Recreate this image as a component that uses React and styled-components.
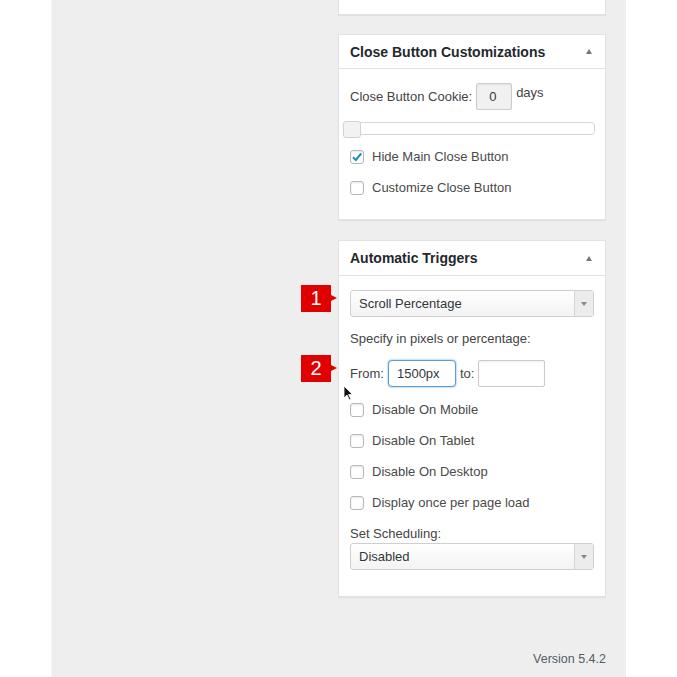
import React from "react";
import styled, { createGlobalStyle } from "styled-components";

const Global = createGlobalStyle`
  body {
    margin: 0;
    background: #ffffff;
    font-family: "Liberation Sans", Arial, sans-serif;
    color: #444;
  }
`;

const Page = styled.div`
  display: flex;
  height: 677px;
  overflow: hidden;
`;

const Column = styled.div`
  margin-left: 51px;
  width: 575px;
  height: 677px;
  background: #eeeeee;
  border-left: 1px solid #f6f6f6;
  box-sizing: border-box;
  display: flex;
  flex-direction: column;
  align-items: flex-end;
  padding-right: 20px;
`;

const Panel = styled.div`
  width: 268px;
  box-sizing: border-box;
  background: #fff;
  border: 1px solid #e2e2e2;
  box-shadow: 0 1px 1px rgba(0, 0, 0, 0.05);
  margin-top: ${(p) => p.$top || 0}px;
  ${(p) => p.$cut && "border-top: none; height: 15px;"}
`;

const Header = styled.div`
  height: ${(p) => p.$h || 33}px;
  display: flex;
  align-items: center;
  justify-content: space-between;
  padding: 0 11px;
  border-bottom: 1px solid #e2e2e2;
  font-size: 14px;
  font-weight: bold;
  color: #23282d;
`;

const Toggle = styled.span`
  width: 0;
  height: 0;
  border-left: 3.5px solid transparent;
  border-right: 3.5px solid transparent;
  border-bottom: 5px solid #72777c;
  margin-right: 2px;
`;

const Body = styled.div`
  padding: ${(p) => p.$pad || "14px 11px 16px"};
  display: flex;
  flex-direction: column;
  font-size: 13px;
`;

const InlineRow = styled.div`
  position: relative;
  display: flex;
  align-items: center;
  gap: 4px;
  height: 27px;
  margin-top: ${(p) => p.$top || 0}px;
`;

const TextBox = styled.div`
  width: ${(p) => p.$w}px;
  height: 27px;
  box-sizing: border-box;
  display: flex;
  align-items: center;
  padding-left: ${(p) => p.$padL || 8}px;
  border: 1px solid ${(p) => (p.$focus ? "#5b9dd9" : "#ccc")};
  border-radius: ${(p) => (p.$focus ? 4 : 2)}px;
  background: ${(p) => p.$bg || "#fff"};
  box-shadow: ${(p) =>
    p.$focus ? "0 0 2px rgba(30,140,190,.8)" : "inset 0 1px 2px rgba(0,0,0,.07)"};
  color: #32373c;
  font-size: 13px;
`;

const Days = styled.span`
  align-self: flex-start;
  margin-top: 2px;
`;

const Slider = styled.div`
  position: relative;
  margin-top: 12px;
  margin-left: -7px;
  width: 250px;
  height: 11px;
  border: 1px solid #d6d6d6;
  border-radius: 4px;
  background: #fff;
`;

const Handle = styled.span`
  position: absolute;
  left: -1px;
  top: -2px;
  width: 16px;
  height: 15px;
  border: 1px solid #d3d3d3;
  border-radius: 3px;
  background: #f2f2f2;
`;

const CheckRow = styled.label`
  display: flex;
  align-items: center;
  gap: 8px;
  height: 31px;
  margin-top: ${(p) => p.$top || 0}px;
  color: #4a4a4a;
`;

const Box = styled.span`
  width: 14px;
  height: 14px;
  box-sizing: border-box;
  border: 1px solid #b4b9be;
  border-radius: 3px;
  background: #fff;
  box-shadow: inset 0 1px 2px rgba(0, 0, 0, 0.1);
  display: flex;
  align-items: center;
  justify-content: center;
`;

const SelectWrap = styled.div`
  position: relative;
`;

const Select = styled.div`
  position: relative;
  height: 27px;
  width: 244px;
  box-sizing: border-box;
  display: flex;
  align-items: center;
  padding-left: 8px;
  border: 1px solid #cfcfcf;
  border-radius: 3px;
  background: linear-gradient(#ffffff, #f3f3f3);
  color: #32373c;
  font-size: 13px;
  margin-top: ${(p) => p.$top || 0}px;
`;

const SelectArrow = styled.span`
  position: absolute;
  right: 0;
  top: 0;
  bottom: 0;
  width: 18px;
  border-left: 1px solid #d6d6d6;
  background: #ececec;
  display: flex;
  align-items: center;
  justify-content: center;
  &::after {
    content: "";
    border-left: 3px solid transparent;
    border-right: 3px solid transparent;
    border-top: 4px solid #888;
  }
`;

const Label = styled.div`
  height: 17px;
  display: flex;
  align-items: center;
  margin-top: ${(p) => p.$top || 0}px;
`;

const Badge = styled.div`
  position: absolute;
  left: -49px;
  top: ${(p) => p.$y || 0}px;
  width: 30px;
  height: 27px;
  background: #e00000;
  color: #fff;
  font-size: 20px;
  display: flex;
  align-items: center;
  justify-content: center;
  &::after {
    content: "";
    position: absolute;
    right: -6px;
    top: 10px;
    border-top: 3.5px solid transparent;
    border-bottom: 3.5px solid transparent;
    border-left: 6px solid #e00000;
  }
`;

const Cursor = styled.svg`
  position: absolute;
  left: -7px;
  top: 25px;
`;

const Version = styled.div`
  margin-top: auto;
  padding-bottom: 11px;
  font-size: 12.5px;
  color: #555d66;
`;

function Check({ checked }) {
  return (
    <Box>
      {checked && (
        <svg width="12" height="12" viewBox="0 0 12 12">
          <path d="M2 6.2 L4.8 9 L10.2 2.5" fill="none" stroke="#1e8cbe" strokeWidth="2" />
        </svg>
      )}
    </Box>
  );
}

export default function App() {
  return (
    <Page>
      <Global />
      <Column>
        <Panel $cut />
        <Panel $top={19}>
          <Header>
            Close Button Customizations
            <Toggle />
          </Header>
          <Body>
            <InlineRow>
              Close Button Cookie:
              <TextBox $w={36} $padL={12} $bg="#f1f1f1">0</TextBox>
              <Days>days</Days>
            </InlineRow>
            <Slider>
              <Handle />
            </Slider>
            <CheckRow $top={6}>
              <Check checked />
              Hide Main Close Button
            </CheckRow>
            <CheckRow>
              <Check />
              Customize Close Button
            </CheckRow>
          </Body>
        </Panel>
        <Panel $top={20}>
          <Header $h={34}>
            Automatic Triggers
            <Toggle />
          </Header>
          <Body $pad="14px 11px 26px">
            <SelectWrap>
              <Badge $y={-5}>1</Badge>
              <Select>
                Scroll Percentage
                <SelectArrow />
              </Select>
            </SelectWrap>
            <Label $top={13}>Specify in pixels or percentage:</Label>
            <InlineRow $top={13}>
              <Badge $y={-5}>2</Badge>
              From:
              <TextBox $w={68} $focus>1500px</TextBox>
              to:
              <TextBox $w={67} />
              <Cursor width="11" height="16" viewBox="0 0 11 16">
                <path d="M1 1 L1 13 L4 10 L6.5 15 L8 14.3 L5.6 9.5 L9.5 9.5 Z" fill="#111" stroke="#fff" strokeWidth="0.8" />
              </Cursor>
            </InlineRow>
            <CheckRow $top={7}>
              <Check />
              Disable On Mobile
            </CheckRow>
            <CheckRow>
              <Check />
              Disable On Tablet
            </CheckRow>
            <CheckRow>
              <Check />
              Disable On Desktop
            </CheckRow>
            <CheckRow>
              <Check />
              Display once per page load
            </CheckRow>
            <Label $top={7}>Set Scheduling:</Label>
            <Select $top={1}>
              Disabled
              <SelectArrow />
            </Select>
          </Body>
        </Panel>
        <Version>Version 5.4.2</Version>
      </Column>
    </Page>
  );
}
